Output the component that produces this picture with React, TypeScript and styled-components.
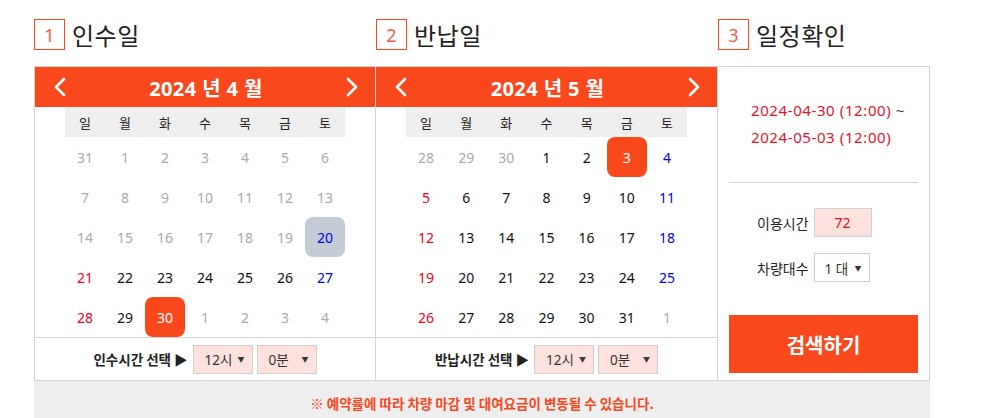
import styled, { createGlobalStyle } from "styled-components";

const GlobalStyle = createGlobalStyle`
  body {
    margin: 0;
    background: #fff;
    font-family: "Noto Sans", "Noto Sans CJK KR", sans-serif;
    color: #222;
  }
  * { box-sizing: border-box; }
`;

const ORANGE = "#fa481d";

const Page = styled.div`
  width: 930px;
  padding: 19px 0 0 34px;
`;

const Row = styled.div`
  display: grid;
  grid-template-columns: 342px 342px 212px;
`;

const Heading = styled.div`
  display: flex;
  align-items: center;
  gap: 7px;
  height: 31px;
  margin-bottom: 16px;
`;

const StepBox = styled.div`
  width: 31px;
  height: 31px;
  border: 1px solid ${ORANGE};
  display: flex;
  align-items: center;
  justify-content: center;
  color: #f45a4a;
  font-size: 18px;
`;

const StepTitle = styled.div`
  font-family: "Noto Sans CJK KR", sans-serif;
  font-size: 24px;
  color: #222;
  letter-spacing: 0.5px;
`;

const Calendar = styled.div<{ $first?: boolean }>`
  border: 1px solid #d4d4d4;
  border-left: ${({ $first }) => ($first ? "1px solid #d4d4d4" : "none")};
  display: flex;
  flex-direction: column;
`;

const CalHeader = styled.div`
  height: 40px;
  background: ${ORANGE};
  display: flex;
  align-items: center;
  justify-content: space-between;
  padding: 0 17px 0 19px;
`;

const CalTitle = styled.div`
  font-family: "Noto Sans", "Noto Sans CJK KR", sans-serif;
  font-weight: 700;
  font-size: 20px;
  letter-spacing: 0.4px;
  color: #fff;
`;

const Week = styled.div`
  margin: 0 30px;
  height: 30px;
  background: #eee;
  display: grid;
  grid-template-columns: repeat(7, 1fr);
  align-items: center;
  text-align: center;
  font-family: "Noto Sans CJK KR", sans-serif;
  font-size: 13px;
  color: #222;
`;

const Days = styled.div`
  margin: 0 30px;
  display: grid;
  grid-template-columns: repeat(7, 1fr);
  grid-auto-rows: 40px;
`;

type Tone = "past" | "sun" | "sat" | "normal";
type Mark = "none" | "start" | "today";

const toneColor: Record<Tone, string> = {
  past: "#aaa",
  sun: "#f5001a",
  sat: "#0000f0",
  normal: "#111",
};

const Day = styled.div<{ $tone: Tone; $mark: Mark }>`
  display: flex;
  align-items: center;
  justify-content: center;
  font-size: 14px;
  border-radius: 8px;
  color: ${({ $tone, $mark }) => ($mark === "start" ? "#fff" : toneColor[$tone])};
  background: ${({ $mark }) =>
    $mark === "start" ? ORANGE : $mark === "today" ? "#c4ccd6" : "transparent"};
`;

const TimeRow = styled.div`
  border-top: 1px solid #d4d4d4;
  height: 43px;
  display: flex;
  align-items: center;
  justify-content: center;
  gap: 4px;
`;

const TimeLabel = styled.div`
  font-family: "Noto Sans CJK KR", sans-serif;
  font-weight: 700;
  font-size: 13.5px;
  color: #222;
  margin-right: 1px;
`;

const Select = styled.div<{ $bg?: string; $w?: number; $pad?: number }>`
  flex: none;
  width: ${({ $w }) => $w ?? 60}px;
  height: 29px;
  border: 1px solid #d0d0d0;
  background: ${({ $bg }) => $bg ?? "#fde1dc"};
  display: flex;
  align-items: center;
  justify-content: space-between;
  padding: 0 7px 0 ${({ $pad }) => $pad ?? 11}px;
  font-family: "Noto Sans", "Noto Sans CJK KR", sans-serif;
  font-size: 13.5px;
  color: #333;
`;

const Caret = styled.span`
  font-size: 7px;
  color: #333;
`;

const Panel = styled.div`
  border: 1px solid #d4d4d4;
  border-left: none;
  display: flex;
  flex-direction: column;
  padding: 0 11px 7px;
`;

const Period = styled.div`
  padding: 30px 0 31px 22px;
  border-bottom: 1px solid #d4d4d4;
  font-size: 15px;
  letter-spacing: 0.6px;
  line-height: 27px;
  color: #e8112b;
`;

const Tilde = styled.span`
  color: #444;
`;

const Fields = styled.div`
  display: flex;
  flex-direction: column;
  gap: 16px;
  padding: 25px 0 0 28px;
`;

const Field = styled.div`
  display: flex;
  align-items: center;
  gap: 5px;
`;

const FieldLabel = styled.div`
  font-family: "Noto Sans CJK KR", sans-serif;
  font-size: 14px;
  color: #222;
`;

const Value = styled.div`
  width: 58px;
  height: 29px;
  border: 1px solid #d0d0d0;
  background: #fde1dc;
  display: flex;
  align-items: center;
  justify-content: center;
  font-size: 14px;
  color: #e8112b;
`;

const SearchButton = styled.button`
  margin-top: auto;
  height: 58px;
  border: none;
  background: ${ORANGE};
  color: #fff;
  font-family: "Noto Sans CJK KR", sans-serif;
  font-weight: 700;
  font-size: 20px;
  cursor: pointer;
`;

const Notice = styled.div`
  width: 896px;
  height: 46px;
  background: #eee;
  padding-top: 12px;
  text-align: center;
  font-family: "Noto Sans CJK KR", sans-serif;
  font-weight: 700;
  font-size: 13.5px;
  color: #f5481f;
`;

const Chevron = ({ dir }: { dir: "left" | "right" }) => (
  <svg width="12" height="20" viewBox="0 0 12 20">
    <polyline
      points={dir === "left" ? "10,2 2,10 10,18" : "2,2 10,10 2,18"}
      fill="none"
      stroke="#fff"
      strokeWidth="2.6"
      strokeLinecap="round"
      strokeLinejoin="round"
    />
  </svg>
);

type Cell = { d: number; tone: Tone; mark?: Mark };

const weekNames = ["일", "월", "화", "수", "목", "금", "토"];

const toneOf = (i: number, active: boolean): Tone => {
  if (!active) return "past";
  const c = i % 7;
  if (c === 0) return "sun";
  if (c === 6) return "sat";
  return "normal";
};

const build = (
  days: number[],
  isActive: (i: number) => boolean,
  marks: Record<number, Mark>
): Cell[] =>
  days.map((d, i) => ({ d, tone: toneOf(i, isActive(i)), mark: marks[i] }));

const aprilDays = [31, ...Array.from({ length: 30 }, (_, i) => i + 1), 1, 2, 3, 4];
const april = build(aprilDays, (i) => i >= 20 && i <= 30, { 20: "today", 30: "start" });

const mayDays = [28, 29, 30, ...Array.from({ length: 31 }, (_, i) => i + 1), 1];
const may = build(mayDays, (i) => i >= 3 && i <= 33, { 5: "start" });

const CalendarView = ({
  title,
  cells,
  label,
  first,
}: {
  title: string;
  cells: Cell[];
  label: string;
  first?: boolean;
}) => (
  <Calendar $first={first}>
    <CalHeader>
      <Chevron dir="left" />
      <CalTitle>{title}</CalTitle>
      <Chevron dir="right" />
    </CalHeader>
    <Week>
      {weekNames.map((w) => (
        <div key={w}>{w}</div>
      ))}
    </Week>
    <Days>
      {cells.map((c, i) => (
        <Day key={i} $tone={c.tone} $mark={c.mark ?? "none"}>
          {c.d}
        </Day>
      ))}
    </Days>
    <TimeRow>
      <TimeLabel>{label} ▶</TimeLabel>
      <Select>
        <span>12시</span>
        <Caret>▼</Caret>
      </Select>
      <Select $pad={11}>
        <span>0분</span>
        <Caret>▼</Caret>
      </Select>
    </TimeRow>
  </Calendar>
);

export default function App() {
  return (
    <>
      <GlobalStyle />
      <Page>
        <Row>
          <Heading>
            <StepBox>1</StepBox>
            <StepTitle>인수일</StepTitle>
          </Heading>
          <Heading>
            <StepBox>2</StepBox>
            <StepTitle>반납일</StepTitle>
          </Heading>
          <Heading>
            <StepBox>3</StepBox>
            <StepTitle>일정확인</StepTitle>
          </Heading>
        </Row>
        <Row>
          <CalendarView title="2024 년 4 월" cells={april} label="인수시간 선택" first />
          <CalendarView title="2024 년 5 월" cells={may} label="반납시간 선택" />
          <Panel>
            <Period>
              2024-04-30 (12:00) <Tilde>~</Tilde>
              <br />
              2024-05-03 (12:00)
            </Period>
            <Fields>
              <Field>
                <FieldLabel>이용시간</FieldLabel>
                <Value>72</Value>
              </Field>
              <Field>
                <FieldLabel>차량대수</FieldLabel>
                <Select $bg="#fff" $w={56} $pad={10}>
                  <span>1 대</span>
                  <Caret>▼</Caret>
                </Select>
              </Field>
            </Fields>
            <SearchButton>검색하기</SearchButton>
          </Panel>
        </Row>
        <Notice>※ 예약률에 따라 차량 마감 및 대여요금이 변동될 수 있습니다.</Notice>
      </Page>
    </>
  );
}
